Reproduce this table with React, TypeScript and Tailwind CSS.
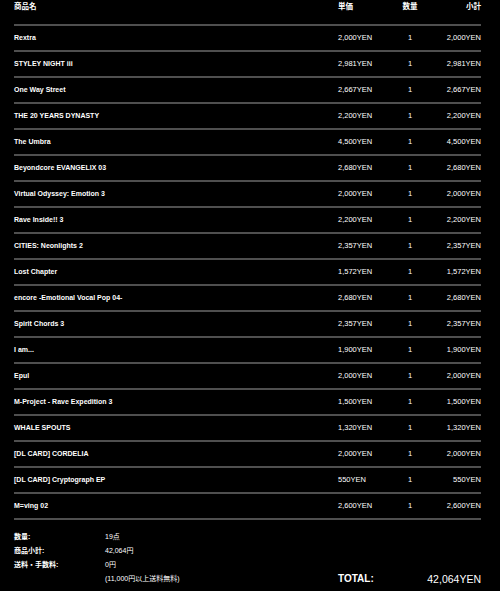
import React from "react";

type Item = {
  name: string;
  price: string;
  qty: number;
};

const items: Item[] = [
  { name: "Rextra", price: "2,000", qty: 1 },
  { name: "STYLEY NIGHT iii", price: "2,981", qty: 1 },
  { name: "One Way Street", price: "2,667", qty: 1 },
  { name: "THE 20 YEARS DYNASTY", price: "2,200", qty: 1 },
  { name: "The Umbra", price: "4,500", qty: 1 },
  { name: "Beyondcore EVANGELIX 03", price: "2,680", qty: 1 },
  { name: "Virtual Odyssey: Emotion 3", price: "2,000", qty: 1 },
  { name: "Rave Inside!! 3", price: "2,200", qty: 1 },
  { name: "CITIES: Neonlights 2", price: "2,357", qty: 1 },
  { name: "Lost Chapter", price: "1,572", qty: 1 },
  { name: "encore -Emotional Vocal Pop 04-", price: "2,680", qty: 1 },
  { name: "Spirit Chords 3", price: "2,357", qty: 1 },
  { name: "I am...", price: "1,900", qty: 1 },
  { name: "Epul", price: "2,000", qty: 1 },
  { name: "M-Project - Rave Expedition 3", price: "1,500", qty: 1 },
  { name: "WHALE SPOUTS", price: "1,320", qty: 1 },
  { name: "[DL CARD] CORDELIA", price: "2,000", qty: 1 },
  { name: "[DL CARD] Cryptograph EP", price: "550", qty: 1 },
  { name: "M=ving 02", price: "2,600", qty: 1 },
];

const gridCols = "grid grid-cols-[324px_48px_48px_47px]";

const App: React.FC = () => {
  return (
    <div
      className="w-[500px] h-[591px] bg-black text-white overflow-hidden pl-[14px] pr-[19px]"
      style={{ fontFamily: '"Liberation Sans", "Noto Sans CJK JP", sans-serif' }}
    >
      {/* Header */}
      <div className={`${gridCols} h-[26px] pt-[2px] border-b-2 border-[#4f4f4f] text-[7.5px] font-bold leading-[10px]`}>
        <div>商品名</div>
        <div>単価</div>
        <div className="text-center">数量</div>
        <div className="text-right">小計</div>
      </div>

      {/* Rows */}
      {items.map((item) => (
        <div
          key={item.name}
          className={`${gridCols} h-[26px] items-center border-b-2 border-[#4f4f4f] leading-[10px]`}
        >
          <div className="text-[7px] font-bold">{item.name}</div>
          <div className="text-[7.5px]">{item.price}YEN</div>
          <div className="text-[7.5px] text-center">{item.qty}</div>
          <div className="text-[7.5px] text-right">{item.price}YEN</div>
        </div>
      ))}

      {/* Summary */}
      <div className="flex items-end justify-between pt-[10px]">
        <div className="grid grid-cols-[91px_1fr] text-[7px] leading-[14px]">
          <div className="font-bold">数量:</div>
          <div>19点</div>
          <div className="font-bold">商品小計:</div>
          <div>42,064円</div>
          <div className="font-bold">送料・手数料:</div>
          <div>0円</div>
          <div></div>
          <div>(11,000円以上送料無料)</div>
        </div>
        <div className="flex w-[143px] justify-between leading-[14px]">
          <span className="text-[10px] font-bold">TOTAL:</span>
          <span className="text-[10.5px]">42,064YEN</span>
        </div>
      </div>
    </div>
  );
};

export default App;
